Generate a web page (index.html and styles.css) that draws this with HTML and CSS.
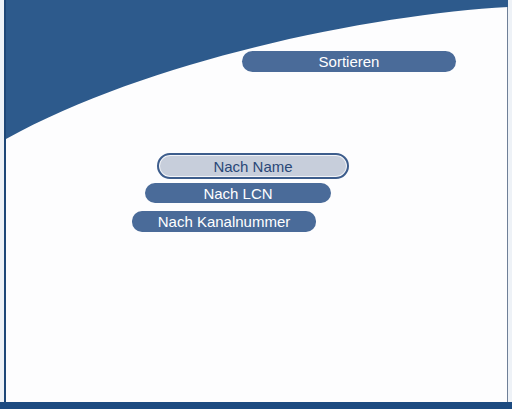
FILE: index.html
```html
<!DOCTYPE html>
<html lang="de">
<head>
  <meta charset="UTF-8" />
  <title>Sortieren</title>
  <link rel="stylesheet" href="styles.css">
</head>
<body>
  <div class="screen">
    <svg class="swoosh" width="502" height="402" viewBox="0 0 502 402" aria-hidden="true">
      <path d="M0,0 H502 V7 C372,14 145,58 -2,140 Z" fill="#2d5a8c" />
    </svg>
    <div class="content">
      <div class="title pill">Sortieren</div>
      <ul class="menu">
        <li class="pill item selected name">Nach Name</li>
        <li class="pill item lcn">Nach LCN</li>
        <li class="pill item number">Nach Kanalnummer</li>
      </ul>
    </div>
  </div>
  <div class="bottom"></div>
</body>
</html>
```

FILE: styles.css
```css
* { box-sizing: border-box; }
body {
  margin: 0;
  width: 512px;
  height: 409px;
  background: #eef2f7;
  font-family: 'Liberation Sans', Arial, sans-serif;
  overflow: hidden;
}
.screen {
  position: relative;
  margin-left: 4px;
  width: 504px;
  height: 402px;
  background: #fdfdfe;
  border-left: 2px solid #1e4777;
  border-right: 1px solid #6f8098;
}
.swoosh {
  position: absolute;
  left: 0;
  top: 0;
}
.content {
  position: relative;
  display: flex;
  flex-direction: column;
  padding-top: 51px;
}
.pill {
  display: flex;
  align-items: center;
  justify-content: center;
  background: #4a6b99;
  color: #fff;
  font-size: 15px;
  border-radius: 12px;
  white-space: nowrap;
}
.title {
  margin-left: 236px;
  width: 214px;
  height: 21px;
  border-radius: 11px;
}
.menu {
  list-style: none;
  margin: 81px 0 0;
  padding: 0;
  display: flex;
  flex-direction: column;
}
.item { height: 20px; border-radius: 10px; }
.name {
  margin-left: 151px;
  width: 192px;
  height: 26px;
  border-radius: 13px;
  font-size: 15px;
}
.selected {
  background: #c7cedb;
  color: #2a4878;
  border: 2px solid #3d5d8c;
  box-shadow: inset 0 0 0 1px #f2f4f8;
}
.lcn {
  margin-top: 4px;
  margin-left: 139px;
  width: 186px;
}
.number {
  margin-top: 8px;
  margin-left: 126px;
  width: 184px;
  height: 21px;
}
.bottom {
  height: 7px;
  background: #1c4a80;
}
```
